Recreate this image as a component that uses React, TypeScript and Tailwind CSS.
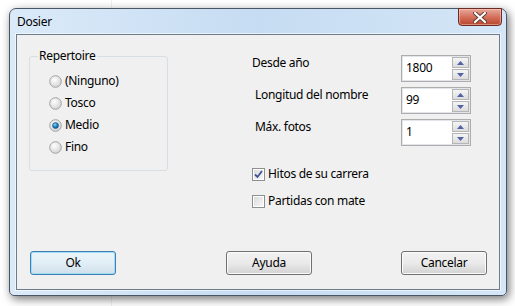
import React from "react";

const font = { fontFamily: '"Noto Sans", "Segoe UI", sans-serif', letterSpacing: "-0.3px" };

function Radio({ checked, label, idx }: { checked?: boolean; label: string; idx: number }) {
  return (
    <div className="flex items-center h-[22px]">
      <svg width="13" height="13" viewBox="0 0 13 13" className="shrink-0">
        <defs>
          <radialGradient id={`rg${idx}`} cx="40%" cy="35%" r="70%">
            <stop offset="0%" stopColor="#ffffff" />
            <stop offset="100%" stopColor="#d0d0d0" />
          </radialGradient>
          <radialGradient id={`rd${idx}`} cx="40%" cy="35%" r="70%">
            <stop offset="0%" stopColor="#8fd0f3" />
            <stop offset="55%" stopColor="#1b84c5" />
            <stop offset="100%" stopColor="#0c4f86" />
          </radialGradient>
        </defs>
        <circle cx="6.5" cy="6.5" r="5.8" fill={`url(#rg${idx})`} stroke="#a3a3a3" strokeWidth="1" />
        {checked && <circle cx="6.5" cy="6.5" r="3" fill={`url(#rd${idx})`} stroke="#16537f" strokeWidth="0.6" />}
      </svg>
      <span className="ml-[3px] text-[12px] leading-[16px] text-black">{label}</span>
    </div>
  );
}

function Spin({ value }: { value: string }) {
  return (
    <div className="flex w-[70px] h-[27px] border border-[#adadad] bg-white shadow-[inset_0_0_0_1px_#e2e6ea]">
      <div className="flex-1 pl-[4px] pt-[4px] text-[12px] leading-[16px] text-black">{value}</div>
      <div className="flex flex-col gap-[1px] py-[1px] pr-[1px] w-[18px]">
        {[0, 1].map((i) => (
          <div
            key={i}
            className="flex-1 flex items-center justify-center border border-[#b5b5b5] bg-gradient-to-b from-[#f5f5f5] to-[#dcdcdc]"
          >
            <svg width="7" height="4" viewBox="0 0 7 4">
              {i === 0 ? (
                <path d="M0 4 L3.5 0 L7 4 Z" fill="#4f63a8" />
              ) : (
                <path d="M0 0 L3.5 4 L7 0 Z" fill="#4f63a8" />
              )}
            </svg>
          </div>
        ))}
      </div>
    </div>
  );
}

function Check({ checked, label }: { checked?: boolean; label: string }) {
  return (
    <div className="flex items-center h-[16px]">
      <div className="w-[13px] h-[13px] border border-[#8e8f8f] bg-white p-[1px] shrink-0">
        <div className="w-full h-full bg-gradient-to-br from-[#dcdcdc] to-[#f6f6f6] flex items-center justify-center">
          {checked && (
            <svg width="9" height="9" viewBox="0 0 9 9">
              <path d="M1 4.5 L3.5 7 L8 1" fill="none" stroke="#3d5596" strokeWidth="1.8" />
            </svg>
          )}
        </div>
      </div>
      <span className="ml-[3px] text-[12px] leading-[16px] text-black">{label}</span>
    </div>
  );
}

function Btn({ label, def }: { label: string; def?: boolean }) {
  return (
    <div
      className={
        "w-[86px] h-[24px] rounded-[3px] border flex items-center justify-center text-[12px] leading-[16px] text-black " +
        (def
          ? "border-[#3c7fb1] bg-gradient-to-b from-[#eaf4fa] via-[#e2eef6] to-[#cfdfea] shadow-[inset_0_0_0_1px_#a4dcf7]"
          : "border-[#707070] bg-gradient-to-b from-[#f2f2f2] via-[#eaeaea] to-[#d2d2d2] shadow-[inset_0_0_0_1px_#fbfbfb]")
      }
    >
      {label}
    </div>
  );
}

export default function App() {
  return (
    <div className="w-[515px] h-[306px] bg-white relative overflow-hidden" style={font}>
      <div className="absolute left-[111px] top-0 bottom-0 w-px bg-[#f0f0f0]" />
      <div className="relative ml-[9px] mt-[8px] w-[498px] h-[288px] rounded-t-[7px] rounded-b-[5px] border border-[#4a5663] shadow-[2px_3px_10px_rgba(0,0,0,0.55)] bg-gradient-to-r from-[#dbeaf9] via-[#c6dcf2] to-[#d4e6f7] flex flex-col px-[6px] pb-[5px]">
        <div className="h-[25px] flex items-center pl-[1px] pt-[1px] text-[12px] leading-[16px] text-black">Dosier</div>
        <div className="absolute right-[4px] top-[-1px] w-[44px] h-[18px] rounded-b-[4px] border border-[#6b2a22] bg-gradient-to-b from-[#e9a99a] via-[#d4705c] to-[#b8442c] flex items-center justify-center shadow-[inset_0_0_0_1px_rgba(255,210,200,0.5)]">
          <svg width="14" height="11" viewBox="0 0 14 11">
            <path d="M2 1 L12 10 M12 1 L2 10" stroke="#5a3a35" strokeWidth="4" strokeLinecap="round" />
            <path d="M2 1 L12 10 M12 1 L2 10" stroke="#ffffff" strokeWidth="2.2" strokeLinecap="round" />
          </svg>
        </div>
        <div className="flex-1 border border-[#6d7c8b] bg-[#f0f0f0] flex flex-col shadow-[0_0_0_1px_rgba(255,255,255,0.6)]">
          <div className="flex">
            <div className="relative ml-[12px] mt-[21px] w-[139px] h-[115px] border border-[#d5dfe5] rounded-[3px] pt-[13px] pl-[19px]">
              <div className="absolute left-[8px] top-[-9px] px-[1px] bg-[#f0f0f0] text-[12px] leading-[16px] text-black">Repertoire</div>
              <Radio idx={0} label="(Ninguno)" />
              <Radio idx={1} label="Tosco" />
              <Radio idx={2} checked label="Medio" />
              <Radio idx={3} label="Fino" />
            </div>
            <div className="ml-[84px] mt-[20px] w-[219px] flex flex-col">
              <div className="flex justify-between items-start h-[32px]">
                <span className="text-[12px] leading-[16px] text-black">Desde año</span>
                <Spin value="1800" />
              </div>
              <div className="flex justify-between items-start h-[32px]">
                <span className="ml-[3px] text-[12px] leading-[16px] text-black">Longitud del nombre</span>
                <Spin value="99" />
              </div>
              <div className="flex justify-between items-start h-[32px]">
                <span className="ml-[3px] text-[12px] leading-[16px] text-black">Máx. fotos</span>
                <Spin value="1" />
              </div>
              <div className="mt-[15px] flex flex-col gap-[11px]">
                <Check checked label="Hitos de su carrera" />
                <Check label="Partidas con mate" />
              </div>
            </div>
          </div>
          <div className="mt-auto mb-[14px] flex pl-[13px]">
            <Btn def label="Ok" />
            <div className="ml-[110px]">
              <Btn label="Ayuda" />
            </div>
            <div className="ml-[89px]">
              <Btn label="Cancelar" />
            </div>
          </div>
        </div>
      </div>
    </div>
  );
}
